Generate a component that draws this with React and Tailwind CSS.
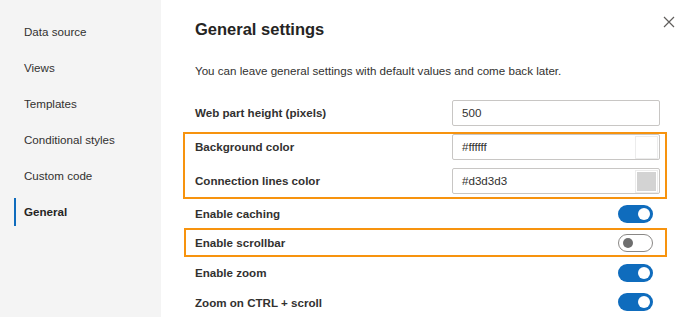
import React from "react";

const navItems = [
  "Data source",
  "Views",
  "Templates",
  "Conditional styles",
  "Custom code",
  "General",
];

function Toggle({ on }) {
  if (on) {
    return (
      <div className="w-[35px] h-[18px] rounded-full bg-[#0f6cbd] flex items-center justify-end pr-[3px]">
        <div className="w-[12px] h-[12px] rounded-full bg-white" />
      </div>
    );
  }
  return (
    <div className="w-[35px] h-[18px] rounded-full border border-[#8a8886] bg-white flex items-center pl-[4px]">
      <div className="w-[10px] h-[10px] rounded-full bg-[#6e6e6e]" />
    </div>
  );
}

function TextBox({ value, swatch }) {
  return (
    <div className="w-[208px] h-[26px] border border-[#c8c6c4] rounded-[2px] bg-white flex items-center justify-between pl-[9px] pr-[1px]">
      <span className="text-[11.6px] text-[#323130]">{value}</span>
      {swatch && (
        <div className="w-[23px] h-[23px] border border-[#ececec] bg-white p-[1px]">
          <div className="w-full h-full" style={{ backgroundColor: swatch }} />
        </div>
      )}
    </div>
  );
}

function Label({ children }) {
  return (
    <span className="text-[11.6px] font-bold text-[#323130]">{children}</span>
  );
}

export default function App() {
  return (
    <div
      className="w-[690px] h-[317px] flex bg-white overflow-hidden relative"
      style={{ fontFamily: '"Liberation Sans", Arial, sans-serif' }}
    >
      <nav className="w-[161px] h-full bg-[#f4f4f4] pt-[14px] flex flex-col">
        {navItems.map((item) => {
          const active = item === "General";
          return (
            <div key={item} className="h-9 flex items-center pl-[14px]">
              <div
                className={
                  active
                    ? "w-[2px] h-[28px] bg-[#0f6cbd]"
                    : "w-[2px] h-[28px] bg-transparent"
                }
              />
              <span
                className={
                  active
                    ? "ml-[8px] text-[11.6px] font-bold text-[#252423]"
                    : "ml-[8px] text-[11.6px] text-[#323130]"
                }
              >
                {item}
              </span>
            </div>
          );
        })}
      </nav>

      <main className="flex-1 pl-[34px] pr-[30px] pt-[17px] flex flex-col">
        <h1 className="h-6 leading-6 text-[16.5px] font-bold text-[#252423]">
          General settings
        </h1>
        <p className="mt-[22px] leading-4 text-[11.6px] text-[#323130]">
          You can leave general settings with default values and come back later.
        </p>

        <div className="mt-[21px] h-[26px] flex items-center justify-between">
          <Label>Web part height (pixels)</Label>
          <TextBox value="500" />
        </div>

        <div className="mt-[6px] -ml-[12px] -mr-[7px] pl-[10px] pr-[5px] pb-[3px] border-2 border-[#f7930e] flex flex-col gap-[8px]">
          <div className="h-[26px] flex items-center justify-between">
            <Label>Background color</Label>
            <TextBox value="#ffffff" swatch="#ffffff" />
          </div>
          <div className="h-[26px] flex items-center justify-between">
            <Label>Connection lines color</Label>
            <TextBox value="#d3d3d3" swatch="#d3d3d3" />
          </div>
        </div>

        <div className="h-[30px] flex items-center justify-between pr-[7px]">
          <Label>Enable caching</Label>
          <Toggle on />
        </div>

        <div className="-ml-[11px] -mr-[7px] pl-[9px] pr-[12px] h-[29px] border-2 border-[#f7930e] flex items-center justify-between">
          <Label>Enable scrollbar</Label>
          <Toggle on={false} />
        </div>

        <div className="mt-[1px] h-[30px] flex items-center justify-between pr-[7px]">
          <Label>Enable zoom</Label>
          <Toggle on />
        </div>

        <div className="h-[30px] flex items-center justify-between pr-[7px]">
          <Label>Zoom on CTRL + scroll</Label>
          <Toggle on />
        </div>
      </main>

      <button className="absolute top-[15px] right-[15px] w-[13px] h-[13px] flex items-center justify-center">
        <svg width="12" height="12" viewBox="0 0 12 12">
          <path d="M1 1 L11 11 M11 1 L1 11" stroke="#605e5c" strokeWidth="1.2" />
        </svg>
      </button>
    </div>
  );
}
